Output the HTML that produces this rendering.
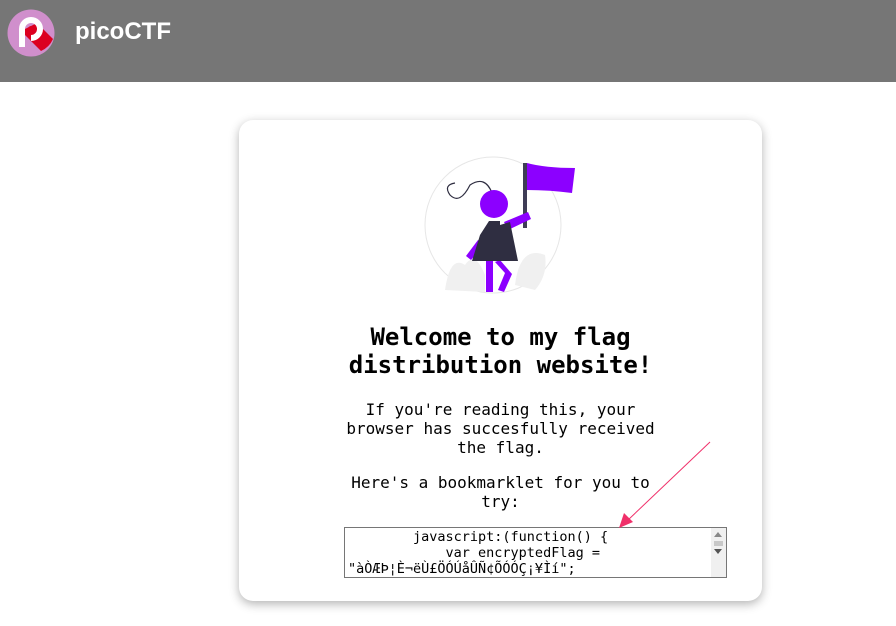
<!DOCTYPE html>
<html><head><meta charset="utf-8"><style>
body{margin:0;width:896px;height:626px;background:#fff;font-family:"DejaVu Sans Mono",monospace;overflow:hidden;position:relative}
.hdr{position:absolute;left:0;top:0;width:896px;height:82px;background:#767676}
.logo-t{position:absolute;left:75px;top:18px;color:#fff;font-family:"Liberation Sans",sans-serif;font-size:24px;font-weight:bold;letter-spacing:0px}
.card{position:absolute;left:239px;top:120px;width:523px;height:481px;background:#fff;border-radius:14px;box-shadow:0 3px 10px rgba(0,0,0,0.3)}
h1{position:absolute;left:0;width:523px;top:203px;margin:0;text-align:center;font-size:24px;line-height:28px;font-weight:bold;color:#000}
.p{position:absolute;left:95px;width:333px;text-align:center;font-size:16px;line-height:19px;color:#000}
.ta{position:absolute;left:105px;top:407px;width:381px;height:49px;border:1px solid #767676;box-sizing:content-box;overflow:hidden;font-size:13.5px;line-height:16px;color:#000}
.ta .txt{padding:1px 3px;white-space:pre}
.sb{position:absolute;right:0;top:0;width:15px;height:49px;background:#f0f0f0}
</style></head><body>
<div class="hdr">
<svg style="position:absolute;left:7px;top:9px" width="48" height="48" viewBox="0 0 48 48">
<circle cx="24" cy="24" r="23.5" fill="#d08fcc"/>
<path d="M14 22 L34 42 A23.5 23.5 0 0 0 46 30 L30 14 Z" fill="#dc0020"/>
<path d="M15 38 V20 A9 9 0 1 1 24 29" fill="none" stroke="#fff" stroke-width="6"/>
<circle cx="24" cy="20" r="3" fill="#dc0020"/>
</svg>
<div class="logo-t">picoCTF</div>
</div>
<div class="card">
<svg style="position:absolute;left:181px;top:30px" width="160" height="150" viewBox="420 150 160 150">
<circle cx="493" cy="225" r="68" fill="#fff" stroke="#e6e6e6" stroke-width="1"/>
<path d="M445 290 Q450 255 465 265 Q475 250 485 275 L485 292 Z" fill="#f0f0f0"/>
<path d="M515 285 Q520 245 545 255 Q548 275 535 290 Z" fill="#f0f0f0"/>
<path d="M492 193 Q485 175 470 185 Q460 205 450 195 Q443 185 455 183" fill="none" stroke="#2f2e41" stroke-width="1.2"/>
<rect x="523" y="163" width="4" height="65" fill="#3f3d56"/>
<path d="M527 163 Q545 168 575 168 L572 193 Q550 190 527 190 Z" fill="#8c00ff"/>
<circle cx="494" cy="204" r="14" fill="#8c00ff"/>
<path d="M504 222 L528 212 L531 219 L508 230 Z" fill="#8c00ff"/>
<path d="M478 240 L466 256 L471 260 L484 245 Z" fill="#8c00ff"/>
<rect x="486" y="260" width="7" height="32" fill="#8c00ff"/>
<path d="M500 260 L512 274 L504 292 L498 290 L505 273 L495 262 Z" fill="#8c00ff"/>
<path d="M489 221 L500 221 L500 225 L510 222 L518 261 L472 261 L480 235 Z" fill="#2f2e41"/>
</svg>
<h1>Welcome to my flag<br>distribution website!</h1>
<div class="p" style="top:280px">If you're reading this, your browser has succesfully received the flag.</div>
<div class="p" style="top:353px">Here's a bookmarklet for you to try:</div>
<div class="ta"><div class="txt">        javascript:(function() {
            var encryptedFlag =
"àÒÆÞ¦È¬ëÙ£ÖÓÚåÛÑ¢ÕÓÓÇ¡¥Ìí";</div>
<div class="sb"><div style="margin:4px 3px;border-left:4px solid transparent;border-right:4px solid transparent;border-bottom:5px solid #888;width:0"></div><div style="margin:3px 3px;height:5px;background:#c8c8c8;width:9px"></div><div style="margin:2px 3px;border-left:4px solid transparent;border-right:4px solid transparent;border-top:5px solid #555;width:0"></div></div>
</div>
</div>
<svg style="position:absolute;left:0;top:0" width="896" height="626">
<line x1="710" y1="442" x2="628" y2="520" stroke="#f0306a" stroke-width="1"/>
<path d="M619 528 L624 513 L633 522 Z" fill="#f0306a"/>
</svg>
</body></html>
